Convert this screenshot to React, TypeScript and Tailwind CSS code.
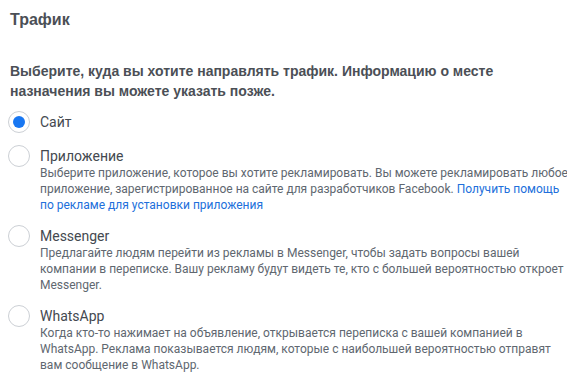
import React from "react"

const options = [
  {
    label: "Приложение",
    description: (
      <>
        Выберите приложение, которое вы хотите рекламировать. Вы можете рекламировать любое приложение,
        зарегистрированное на сайте для разработчиков Facebook.{" "}
        <a className="text-[#216fdb]" href="#">
          Получить помощь по рекламе для установки приложения
        </a>
      </>
    ),
  },
  {
    label: "Messenger",
    description:
      "Предлагайте людям перейти из рекламы в Messenger, чтобы задать вопросы вашей компании в переписке. Вашу рекламу будут видеть те, кто с большей вероятностью откроет Messenger.",
  },
  {
    label: "WhatsApp",
    description:
      "Когда кто-то нажимает на объявление, открывается переписка с вашей компанией в WhatsApp. Реклама показывается людям, которые с наибольшей вероятностью отправят вам сообщение в WhatsApp.",
  },
]

function Radio({ checked }: { checked?: boolean }) {
  return (
    <div className="flex h-[22px] w-[22px] shrink-0 items-center justify-center rounded-full border border-[#ccd0d5] bg-white">
      {checked && <div className="h-[12px] w-[12px] rounded-full bg-[#1877f2]" />}
    </div>
  )
}

export default function App() {
  return (
    <div className="h-[388px] w-[567px] bg-white pl-[10px] pr-4 pt-[10px] font-['Roboto',sans-serif] text-[#1c1e21]">
      <h2 className="font-['Liberation_Sans',sans-serif] text-[16px] font-bold leading-[20px] text-[#4b4f56]">
        Трафик
      </h2>

      <p className="mt-[31px] w-[540px] font-['Liberation_Sans',sans-serif] text-[14px] font-bold leading-[20px] text-[#4b4f56]">
        Выберите, куда вы хотите направлять трафик. Информацию о месте назначения вы можете указать позже.
      </p>

      <div className="mt-[10px] -ml-[2px] flex flex-col gap-[12px]">
        <label className="flex items-center gap-[10px]">
          <Radio checked />
          <span className="text-[14px] leading-[20px] text-[#444950]">Сайт</span>
        </label>

        {options.map((opt) => (
          <label key={opt.label} className="flex items-start gap-[10px]">
            <Radio />
            <div className="mt-[2px]">
              <div className="text-[14px] leading-[18px] text-[#444950]">{opt.label}</div>
              <p className="w-[530px] text-[12px] leading-[16px] text-[#606770]">{opt.description}</p>
            </div>
          </label>
        ))}
      </div>
    </div>
  )
}
